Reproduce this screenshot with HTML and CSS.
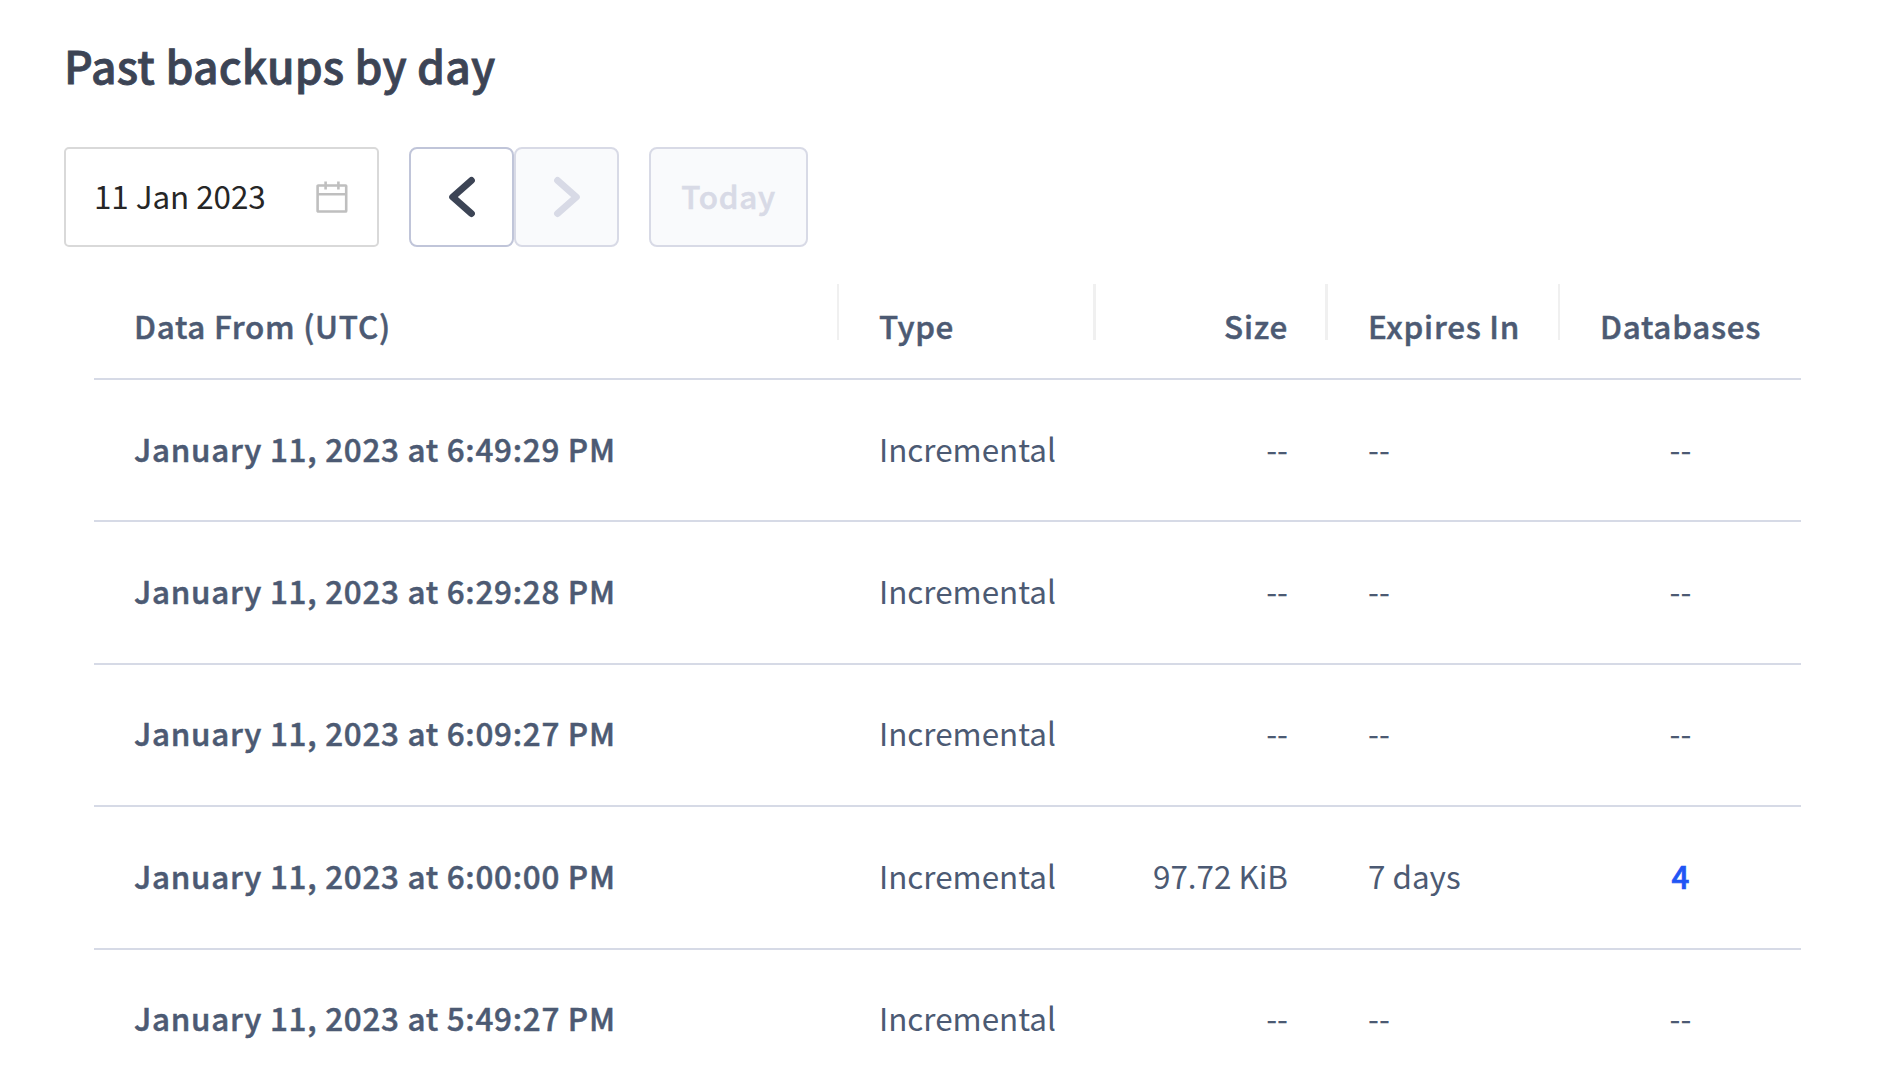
FILE: index.html
```html
<!DOCTYPE html>
<html lang="en">
<head>
<meta charset="utf-8">
<title>Past backups by day</title>
<link rel="stylesheet" href="styles.css">
</head>
<body>
<main class="page">
  <h1 class="title">Past backups by day</h1>
  <div class="toolbar">
    <div class="date-picker">
      <span>11 Jan 2023</span>
      <svg class="calendar" width="32" height="32" viewBox="0 0 32 32" fill="none" stroke="#bfbfbf" stroke-width="2.6">
        <rect x="1.6" y="4.5" width="28.6" height="26" rx="0.6"/>
        <path d="M1 13.2H30.5M9.6 0.6V8.6M22.4 0.6V8.6"/>
      </svg>
    </div>
    <div class="pager">
      <button class="btn btn-step" type="button" aria-label="Previous day">
        <svg width="28" height="42" viewBox="0 0 28 42" fill="none" stroke="currentColor" stroke-width="7" stroke-linecap="round" stroke-linejoin="round"><path d="M23.4 4.5L4.7 21L23.4 37.5"/></svg>
      </button>
      <button class="btn btn-step" type="button" aria-label="Next day" disabled>
        <svg width="28" height="42" viewBox="0 0 28 42" fill="none" stroke="currentColor" stroke-width="7" stroke-linecap="round" stroke-linejoin="round"><path d="M4.6 4.5L23.3 21L4.6 37.5"/></svg>
      </button>
    </div>
    <button class="btn btn-today" type="button" disabled>Today</button>
  </div>
  <div class="table">
    <div class="row head">
      <div class="cell">Data From (UTC)</div><div class="cell type">Type</div><div class="cell size">Size</div><div class="cell">Expires In</div><div class="cell dbs">Databases</div>
    </div>
    <div class="row">
      <div class="cell from">January 11, 2023 at 6:49:29 PM</div><div class="cell">Incremental</div><div class="cell size">--</div><div class="cell">--</div><div class="cell dbs">--</div>
    </div>
    <div class="row">
      <div class="cell from">January 11, 2023 at 6:29:28 PM</div><div class="cell">Incremental</div><div class="cell size">--</div><div class="cell">--</div><div class="cell dbs">--</div>
    </div>
    <div class="row">
      <div class="cell from">January 11, 2023 at 6:09:27 PM</div><div class="cell">Incremental</div><div class="cell size">--</div><div class="cell">--</div><div class="cell dbs">--</div>
    </div>
    <div class="row">
      <div class="cell from">January 11, 2023 at 6:00:00 PM</div><div class="cell">Incremental</div><div class="cell size">97.72 KiB</div><div class="cell">7 days</div><div class="cell dbs"><a class="link">4</a></div>
    </div>
    <div class="row">
      <div class="cell from">January 11, 2023 at 5:49:27 PM</div><div class="cell">Incremental</div><div class="cell size">--</div><div class="cell">--</div><div class="cell dbs">--</div>
    </div>
  </div>
</main>
</body>
</html>
```
FILE: styles.css
```css
* { box-sizing: border-box; }

body {
  margin: 0;
  height: 1082px;
  overflow: hidden;
  background: #fff;
  color: #4c5a73;
  font: 400 31.4px/46px "Noto Sans CJK JP", "Noto Sans", sans-serif;
}

.page { padding: 35px 77px 0 64px; }

.title {
  margin: 0 0 52px;
  color: #3c4455;
  font-size: 44.5px;
  font-weight: 500;
  line-height: 60px;
  letter-spacing: 0.19px;
  -webkit-text-stroke: 0.8px;
}

.toolbar { display: flex; gap: 30px; height: 100px; }

.date-picker {
  display: flex;
  align-items: center;
  justify-content: space-between;
  width: 315px;
  padding: 0 29px 0 28px;
  border: 2px solid #d9d9d9;
  border-radius: 5px;
  color: #262626;
}
.date-picker span { padding-bottom: 3px; letter-spacing: -0.05px; }

.pager { display: flex; }

.btn {
  display: flex;
  align-items: center;
  justify-content: center;
  padding: 0;
  border: 2px solid #c0c5d9;
  border-radius: 8px;
  background: #fff;
  color: #3c4455;
  font: inherit;
  font-weight: 500;
}
.btn:disabled { border-color: #d8dae6; background: #f9fafc; color: #d8dae6; }
.btn-step { width: 105px; }
.btn-today { width: 159px; padding-bottom: 3px; letter-spacing: 0.7px; -webkit-text-stroke: 0.6px; }

.table { padding: 0 0 0 30px; }

.row {
  display: grid;
  grid-template-columns: 745px 257px 232px 232px 241px;
  height: 142.4px;
  padding-top: 45.5px;
  border-top: 2px solid #d6dae6;
}
.cell { padding: 0 40px; white-space: nowrap; }
.cell.from { font-weight: 500; letter-spacing: 0.74px; -webkit-text-stroke: 0.5px; }
.cell.size { text-align: right; }
.cell.dbs { text-align: center; }

.head {
  height: 131px;
  padding-top: 37px;
  border-top: 0;
  font-weight: 500;
  letter-spacing: 0.74px;
  -webkit-text-stroke: 0.5px;
}
.head .cell {
  padding-top: 18.5px;
  background: linear-gradient(#f0f0f0, #f0f0f0) right top / 2px 56px no-repeat;
}
.head .type, .head .size { background-size: 3px 56px; }
.head .type { letter-spacing: 0.5px; }
.head .dbs { background: none; }

.link { color: #2055f5; font-weight: 500; -webkit-text-stroke: 0.7px; }
```
